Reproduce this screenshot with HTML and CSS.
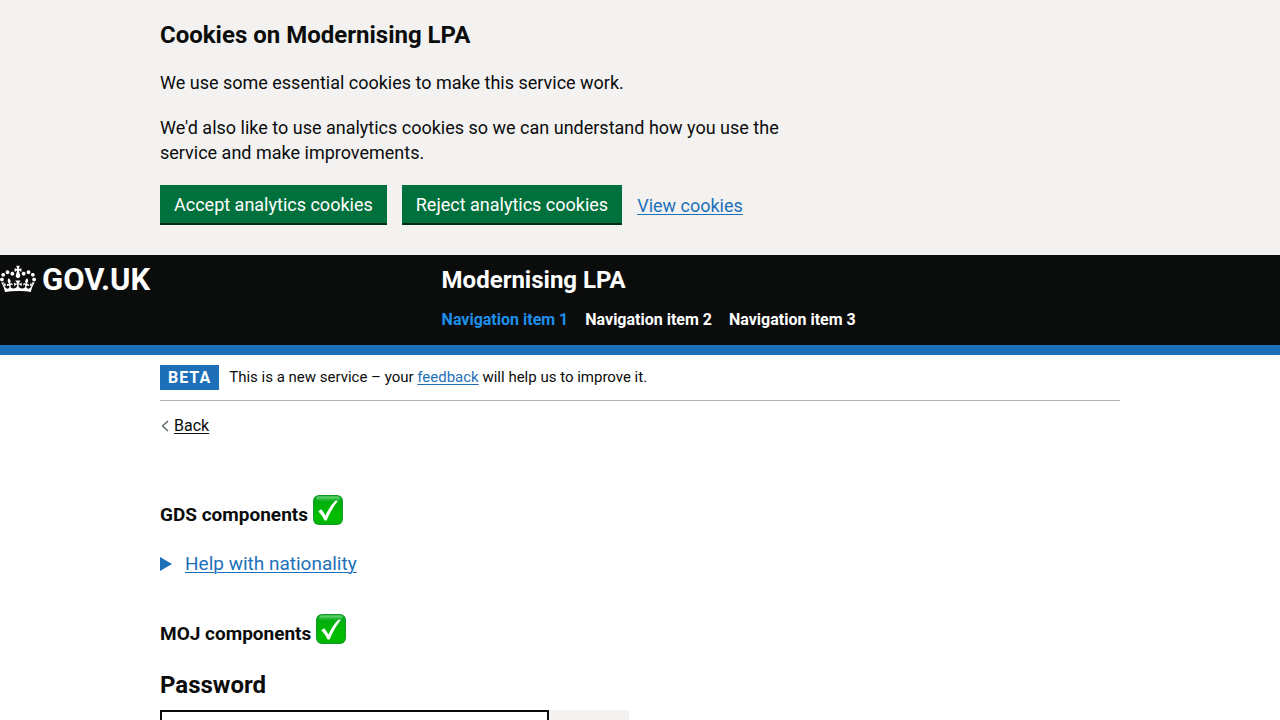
FILE: index.html
```html
<!DOCTYPE html>
<html lang="en">
<head>
<meta charset="utf-8">
<meta name="viewport" content="width=device-width, initial-scale=1">
<title>Modernising LPA</title>
<link rel="stylesheet" href="styles.css">
</head>
<body>
<svg class="defs" aria-hidden="true">
  <defs>
    <linearGradient id="tick-fill" x1="0" y1="0" x2="0" y2="1">
      <stop offset="0" stop-color="#08a51c"/>
      <stop offset="0.35" stop-color="#00b408"/>
      <stop offset="0.75" stop-color="#00be00"/>
      <stop offset="1" stop-color="#00b404"/>
    </linearGradient>
    <linearGradient id="tick-shine" x1="0" y1="0" x2="0" y2="1">
      <stop offset="0" stop-color="#7fdc8b"/>
      <stop offset="1" stop-color="#2fc23c" stop-opacity="0.1"/>
    </linearGradient>
    <symbol id="tick" viewBox="0 0 30 30">
      <rect width="30" height="30" rx="6" fill="#12992a"/>
      <rect x="1" y="1" width="28" height="28" rx="5" fill="url(#tick-fill)"/>
      <rect x="3" y="1.5" width="24" height="5" rx="2.5" fill="url(#tick-shine)"/>
      <path fill="#fff" d="M5.3 16.2 8.2 14.2Q10.9 17 12.4 20.6 16.6 11.4 22.2 5.8L25 5.8Q18.2 14.2 13.6 25.4L11.6 25.4Q9.2 20.2 5.3 16.2Z"/>
    </symbol>
  </defs>
</svg>

<section class="cookies" aria-label="Cookies on Modernising LPA">
  <div class="container">
    <div class="cookies-text">
      <h2 class="heading-m">Cookies on Modernising LPA</h2>
      <p class="body">We use some essential cookies to make this service work.</p>
      <p class="body">We'd also like to use analytics cookies so we can understand how you use the service and make improvements.</p>
    </div>
    <div class="button-group">
      <button class="button" type="button">Accept analytics cookies</button>
      <button class="button" type="button">Reject analytics cookies</button>
      <a class="link" href="#">View cookies</a>
    </div>
  </div>
</section>

<header class="header">
  <div class="header-row">
    <div class="header-logo">
      <a class="logo-link" href="#">
        <svg class="crown" viewBox="0 0 132 97" aria-hidden="true"><path fill="currentColor" fill-rule="evenodd" d="M25 30.2c3.5 1.5 7.7-.2 9.1-3.7 1.5-3.6-.2-7.8-3.9-9.2-3.6-1.4-7.6.3-9.1 3.9-1.4 3.5.3 7.5 3.9 9zM9 39.5c3.6 1.5 7.8-.2 9.2-3.7 1.5-3.6-.2-7.8-3.9-9.1-3.6-1.5-7.6.2-9.1 3.8-1.4 3.5.3 7.5 3.8 9zM4.4 57.2c3.5 1.5 7.7-.2 9.1-3.8 1.5-3.6-.2-7.7-3.9-9.1-3.5-1.5-7.6.3-9.1 3.8-1.4 3.5.3 7.6 3.9 9.1zm38.3-21.4c3.5 1.5 7.7-.2 9.1-3.8 1.5-3.6-.2-7.7-3.9-9.1-3.6-1.5-7.6.3-9.1 3.8-1.3 3.6.4 7.7 3.9 9.1zm64.4-5.6c-3.6 1.5-7.8-.2-9.1-3.7-1.5-3.6.2-7.8 3.8-9.2 3.6-1.4 7.7.3 9.2 3.9 1.3 3.5-.4 7.5-3.9 9zm15.9 9.3c-3.6 1.5-7.7-.2-9.1-3.7-1.5-3.6.2-7.8 3.7-9.1 3.6-1.5 7.7.2 9.2 3.8 1.5 3.5-.3 7.5-3.8 9zm4.7 17.7c-3.6 1.5-7.8-.2-9.2-3.8-1.5-3.6.2-7.7 3.9-9.1 3.6-1.5 7.7.3 9.2 3.8 1.3 3.5-.4 7.6-3.9 9.1zM89.3 35.8c-3.6 1.5-7.8-.2-9.2-3.8-1.4-3.6.2-7.7 3.9-9.1 3.6-1.5 7.7.3 9.2 3.8 1.4 3.6-.3 7.7-3.9 9.1zM69.7 17.7l8.9 4.7V9.3l-8.9 2.8c-.2-.3-.5-.6-.9-.9L72.4 0H59.6l3.5 11.2c-.3.3-.6.5-.9.9l-8.8-2.8v13.1l8.8-4.7c.3.3.6.7.9.9l-5 15.4v.1c-.2.8-.4 1.6-.4 2.4 0 4.1 3.1 7.5 7 8.1h.2c.3 0 .7.1 1 .1.4 0 .7 0 1-.1h.2c4-.6 7.1-4.1 7.1-8.1 0-.8-.1-1.7-.4-2.4V34l-5.1-15.4c.4-.2.7-.6 1-.9zM66 92.8c16.9 0 32.8 1.1 47.1 3.2 4-16.9 8.9-26.7 14-33.5l-9.6-3.4c1 4.9 1.1 7.2 0 10.2-1.5-1.4-3-4.3-4.2-8.7L108.6 76c2.8-2 5-3.2 7.5-3.3-4.4 9.4-10 11.9-13.6 11.2-4.3-.8-6.3-4.6-5.6-7.9 1-4.7 5.7-5.9 8-.5 4.3-8.7-3-11.4-7.6-8.8 7.1-7.2 7.9-13.5 2.1-21.1-8 6.1-8.1 12.3-4.5 20.8-4.7-5.4-12.1-2.5-9.5 6.2 3.4-5.2 7.9-2 7.2 3.1-.6 4.3-6.4 7.8-13.5 7.2-10.3-.9-10.9-8-11.2-13.8 2.5-.5 7.1 1.8 11 7.3L80.2 60c-4.1 4.4-8 5.3-12.3 5.4 1.4-4.4 8-11.6 8-11.6H55.5s6.4 7.2 7.9 11.6c-4.2-.1-8-1-12.3-5.4l1.4 16.4c3.9-5.5 8.5-7.7 10.9-7.3-.3 5.8-.9 12.8-11.1 13.8-7.2.6-12.9-2.9-13.5-7.2-.7-5 3.8-8.3 7.1-3.1 2.7-8.7-4.6-11.6-9.4-6.2 3.7-8.5 3.6-14.7-4.6-20.8-5.8 7.6-5 13.9 2.2 21.1-4.7-2.6-11.9.1-7.7 8.8 2.3-5.5 7.1-4.2 8.1.5.7 3.3-1.3 7.1-5.7 7.9-3.5.7-9-1.8-13.5-11.2 2.5.1 4.7 1.3 7.5 3.3l-4.7-15.4c-1.2 4.4-2.7 7.2-4.3 8.7-1.1-3-.9-5.3 0-10.2l-9.5 3.4c5 6.9 9.9 16.7 14 33.5 14.8-2.1 30.8-3.2 47.7-3.2z"/></svg>
        <span>GOV.UK</span>
      </a>
    </div>
    <div class="header-content">
      <a class="service-name" href="#">Modernising LPA</a>
      <nav aria-label="Menu">
        <ul class="nav">
          <li><a class="nav-link nav-link-active" href="#" aria-current="page">Navigation item 1</a></li>
          <li><a class="nav-link" href="#">Navigation item 2</a></li>
          <li><a class="nav-link" href="#">Navigation item 3</a></li>
        </ul>
      </nav>
    </div>
  </div>
</header>

<div class="container">
  <div class="phase">
    <strong class="tag">BETA</strong>
    <span>This is a new service – your <a class="link" href="#">feedback</a> will help us to improve it.</span>
  </div>
  <a class="back" href="#">
    <svg class="chevron" viewBox="0 0 8 12" aria-hidden="true"><path d="M7 1 1.5 6 7 11" fill="none" stroke="#505a5f" stroke-width="1.2"/></svg>
    <span class="back-text">Back</span>
  </a>
  <main class="main">
    <h2 class="heading-s">GDS components <svg class="emoji" role="img" aria-label="done"><use href="#tick"/></svg></h2>
    <details class="details">
      <summary class="summary"><svg class="arrow" viewBox="0 0 12 14" aria-hidden="true"><path d="M0 0 12 7 0 14Z" fill="currentColor"/></svg><span class="summary-text">Help with nationality</span></summary>
      <p class="body">We need to know your nationality.</p>
    </details>
    <h2 class="heading-s">MOJ components <svg class="emoji" role="img" aria-label="done"><use href="#tick"/></svg></h2>
    <label class="field-label" for="password">Password</label>
    <div class="field">
      <input class="input" id="password" type="password">
      <button class="reveal" type="button">Show</button>
    </div>
  </main>
</div>
</body>
</html>
```

FILE: styles.css
```css
* {
  box-sizing: border-box;
}

body {
  margin: 0;
  background: #fff;
  color: #0b0c0c;
  font-family: Roboto, "Liberation Sans", sans-serif;
  font-size: 18px;
  line-height: 25px;
}

.defs {
  position: absolute;
  width: 0;
  height: 0;
}

.container {
  max-width: 960px;
  margin: 0 auto;
}

.link {
  color: #1d70b8;
  text-decoration: underline;
  text-decoration-thickness: 1px;
  text-underline-offset: 2px;
}

.cookies {
  padding: 20px 0 30px;
  background: #f3f2f1;
}

.cookies-text {
  max-width: 640px;
}

.heading-m {
  margin: 0 0 20px;
  font-size: 24px;
  line-height: 30px;
}

.body {
  margin: 0 0 20px;
}

.button-group {
  display: flex;
  flex-wrap: wrap;
  align-items: center;
  gap: 15px;
}

.button {
  height: 40px;
  padding: 0 14px 2px;
  border: 0;
  background: #00703c;
  box-shadow: inset 0 -2px 0 #002d18;
  color: #fff;
  font: inherit;
  cursor: pointer;
}

.header {
  padding: 10px 0;
  border-bottom: 10px solid #1d70b8;
  background: #0b0c0c;
  color: #fff;
}

.header-row {
  display: flex;
}

.header-logo {
  flex: 0 0 34.5%;
}

.logo-link {
  display: inline-flex;
  align-items: flex-start;
  gap: 6px;
  color: #fff;
  font-size: 31px;
  font-weight: 700;
  line-height: 30px;
  text-decoration: none;
}

.crown {
  width: 36px;
  height: 28px;
}

.service-name {
  display: block;
  margin-bottom: 10px;
  color: #fff;
  font-size: 24px;
  font-weight: 700;
  line-height: 30px;
  text-decoration: none;
}

.nav {
  display: flex;
  flex-wrap: wrap;
  gap: 17px;
  margin: 0;
  padding: 5px 0;
  list-style: none;
  font-size: 16px;
  font-weight: 700;
  line-height: 20px;
}

.nav-link {
  color: #fff;
  text-decoration: none;
}

.nav-link-active {
  color: #1d8feb;
}

.phase {
  display: flex;
  align-items: center;
  gap: 10px;
  padding: 10px 0;
  border-bottom: 1px solid #b1b4b6;
  font-size: 15px;
}

.tag {
  padding: 0 8px;
  background: #1d70b8;
  color: #fff;
  font-size: 16px;
  letter-spacing: 1px;
}

.back {
  display: inline-flex;
  align-items: center;
  gap: 5px;
  margin-top: 15px;
  padding-left: 1px;
  color: #0b0c0c;
  font-size: 16px;
  line-height: 20px;
  text-decoration: none;
}

.back-text {
  text-decoration: underline;
  text-decoration-thickness: 1px;
  text-underline-offset: 2px;
}

.chevron {
  width: 8px;
  height: 12px;
}

.main {
  padding-top: 41px;
}

.heading-s {
  margin: 0 0 19px;
  padding-top: 16px;
  font-size: 19px;
  line-height: 35px;
}

.emoji {
  width: 30px;
  height: 30px;
  vertical-align: -4px;
}

.details {
  margin-bottom: 21px;
}

.summary {
  display: inline-flex;
  align-items: center;
  gap: 13px;
  color: #1d70b8;
  font-size: 19px;
  cursor: pointer;
  list-style: none;
}

.arrow {
  width: 12px;
  height: 14px;
}

.summary-text {
  text-decoration: underline;
  text-decoration-thickness: 1px;
  text-underline-offset: 2px;
}

.field-label {
  display: block;
  margin-bottom: 10px;
  font-size: 24px;
  font-weight: 700;
  line-height: 30px;
}

.field {
  display: flex;
}

.input {
  flex: 0 1 389px;
  min-width: 0;
  height: 40px;
  padding: 5px;
  border: 2px solid #0b0c0c;
  font: inherit;
}

.reveal {
  width: 80px;
  height: 40px;
  border: 0;
  background: #f3f2f1;
  box-shadow: inset 0 -2px 0 #929191;
  color: #0b0c0c;
  font: inherit;
}
```
